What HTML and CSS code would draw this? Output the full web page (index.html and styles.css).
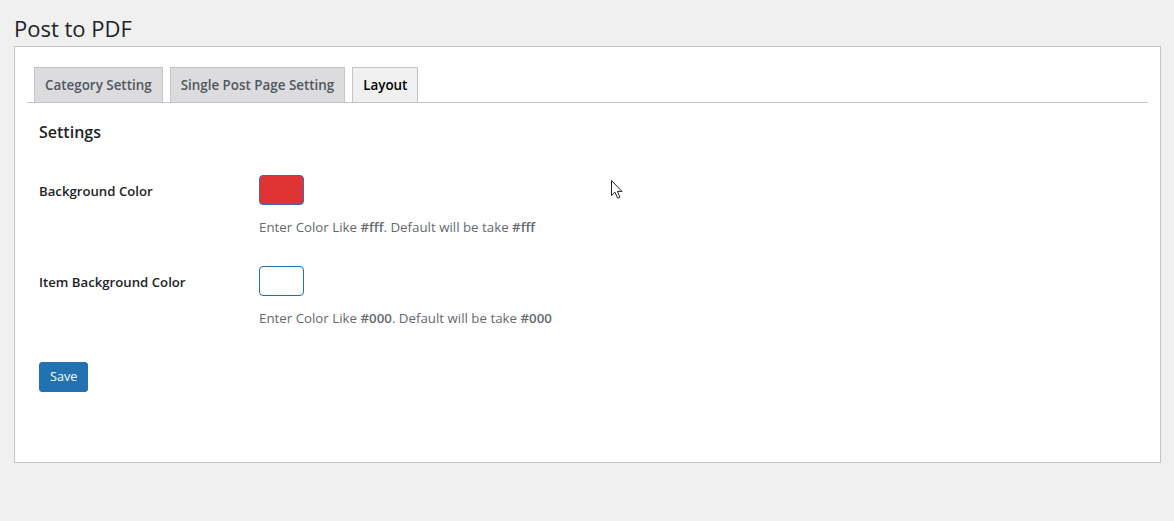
FILE: index.html
```html
<!DOCTYPE html>
<html lang="en">
<head>
<meta charset="utf-8">
<title>Post to PDF</title>
<link rel="stylesheet" href="styles.css">
</head>
<body>
<div class="page">
  <h1 class="page-title">Post to PDF</h1>
  <div class="panel">
    <nav class="tabs">
      <a class="tab">Category Setting</a>
      <a class="tab">Single Post Page Setting</a>
      <a class="tab tab-active">Layout</a>
    </nav>
    <div class="content">
      <h2 class="section-title">Settings</h2>
      <div class="form-row">
        <label class="form-label">Background Color</label>
        <div class="form-field">
          <div class="swatch swatch-red"></div>
          <p class="desc">Enter Color Like <strong>#fff</strong>. Default will be take <strong>#fff</strong></p>
        </div>
      </div>
      <div class="form-row">
        <label class="form-label">Item Background Color</label>
        <div class="form-field">
          <div class="swatch swatch-white"></div>
          <p class="desc">Enter Color Like <strong>#000</strong>. Default will be take <strong>#000</strong></p>
        </div>
      </div>
      <button class="btn-primary">Save</button>
    </div>
  </div>
</div>
<svg class="cursor" width="14" height="21" viewBox="0 0 14 21">
  <path d="M1.5 1.5 L1.5 16.5 L5 13.2 L7.6 19.2 L9.9 18.2 L7.4 12.4 L12 12.4 Z" fill="#fff" stroke="#1d2327" stroke-width="1" stroke-linejoin="miter"/>
</svg>
</body>
</html>
```
FILE: styles.css
```css
html, body {
  margin: 0;
  padding: 0;
}
body {
  background: #f0f0f1;
  font-family: "Open Sans", "Noto Sans", "Liberation Sans", sans-serif;
  color: #1d2327;
  font-size: 13px;
  min-height: 521px;
}
.page {
  padding: 13px 13px 0 14px;
}
.page-title {
  margin: 0 0 3px 0;
  font-size: 22px;
  font-weight: 400;
  line-height: 30px;
  color: #1d2327;
}
.panel {
  background: #fff;
  border: 1px solid #c3c4c7;
  padding: 20px 12px 70px;
}
.tabs {
  display: flex;
  gap: 7px;
  padding-left: 7px;
  border-bottom: 1px solid #c3c4c7;
}
.tab {
  display: block;
  border: 1px solid #c3c4c7;
  border-bottom: none;
  background: #dcdcde;
  color: #50575e;
  font-size: 13.4px;
  font-weight: 600;
  line-height: 24px;
  padding: 5px 10px;
  margin-bottom: 0;
}
.tab-active {
  background: #f0f0f1;
  color: #000;
}
.content {
  padding: 0 12px;
}
.section-title {
  margin: 17px 0 16px;
  font-size: 16px;
  font-weight: 600;
  line-height: 24px;
}
.form-row {
  display: flex;
}
.form-label {
  width: 220px;
  flex: none;
  padding-top: 21px;
  font-weight: 600;
  font-size: 13.2px;
  line-height: 20px;
  color: #1d2327;
}
.form-field {
  padding: 15px 0 14px;
}
.swatch {
  width: 45px;
  height: 30px;
  box-sizing: border-box;
  border: 1px solid #2271b1;
  border-radius: 4px;
}
.swatch-red {
  background: #e03434;
  border-color: #3a6fa8;
}
.swatch-white {
  background: #fff;
}
.desc {
  margin: 12px 0 0;
  line-height: 20px;
  font-size: 13.3px;
  color: #646970;
}
.desc strong {
  font-weight: 600;
}
.btn-primary {
  margin-top: 20px;
  display: block;
  height: 30px;
  padding: 0 10px;
  background: #2271b1;
  border: 1px solid #2271b1;
  border-radius: 3px;
  color: #fff;
  font-family: inherit;
  font-size: 12.6px;
  line-height: 28px;
}
.cursor {
  position: absolute;
  left: 610px;
  top: 179px;
}
```
